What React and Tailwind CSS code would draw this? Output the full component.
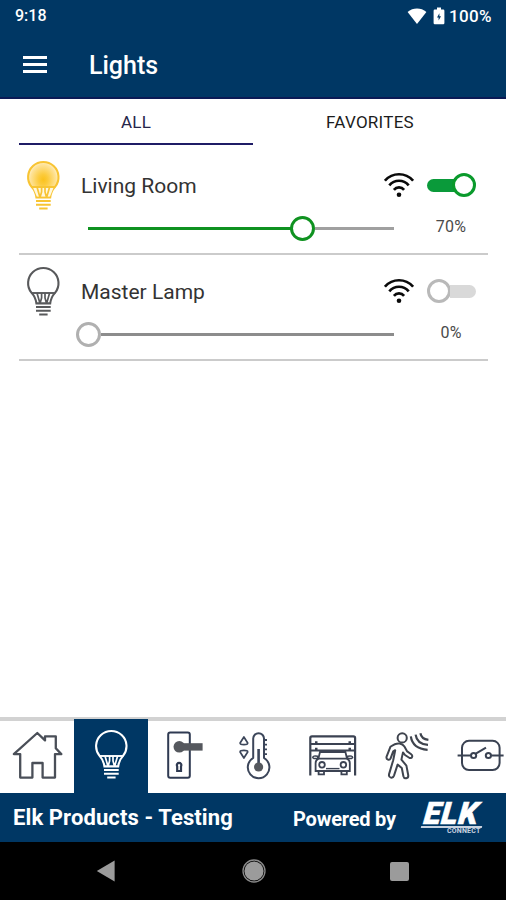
import React, { useState } from 'react';

const initialLights = [
  { id: 1, name: 'Living Room', level: 70 },
  { id: 2, name: 'Master Lamp', level: 0 },
];

const BulbIcon = ({ lit }) => (
  <svg width="35" height="52" viewBox="0 0 35 52" fill="none" stroke="currentColor" strokeWidth="2.1">
    <defs>
      <radialGradient id="glow">
        <stop offset="0" stopColor="#fbc21c" />
        <stop offset="0.3" stopColor="#fccb3c" />
        <stop offset="0.85" stopColor="#fee39a" />
        <stop offset="1" stopColor="#fff0c4" />
      </radialGradient>
    </defs>
    <path
      d="M10.4 37.4 C9.8 32.5 8 29.4 5.4 26.6 A15.2 15.2 0 1 1 29.2 26.6 C26.6 29.4 24.8 32.5 24.2 37.4 Z"
      fill={lit ? 'url(#glow)' : 'none'}
    />
    {lit && <path d="M7 27.6 H27.6 L24 36.6 H10.8 Z" fill="#fff8df" stroke="none" />}
    <path d="M5.2 27 H29.4" strokeWidth="1.9" />
    <path d="M11 27 L14 37.4 M15.6 27 V32 L14 37.4 M19 27 V32 L20.6 37.4 M23.6 27 L20.6 37.4" strokeWidth="1.7" />
    <path d="M10 41 H24.7 M10 44.7 H24.7 M13.2 48.6 H21.6" strokeWidth="2" />
  </svg>
);

const SignalIcon = () => (
  <svg width="30" height="26" viewBox="0 0 30 26" fill="none" stroke="#0a0a0a" strokeWidth="2.7">
    <path d="M0.9 8.7 C8.5 0.1 21.5 0.1 29.1 8.7" />
    <path d="M5.3 13.3 C10.6 7.2 19.4 7.2 24.7 13.3" />
    <path d="M9.9 17.9 C12.6 14.6 17.4 14.6 20.1 17.9" />
    <circle cx="15" cy="22.7" r="2.3" fill="#0a0a0a" stroke="none" />
  </svg>
);

const HomeIcon = () => (
  <svg width="74" height="72" viewBox="0 721 74 72" fill="none" stroke="#4a4f58" strokeWidth="2.3" strokeLinejoin="round">
    <path d="M37.3 733 L45 740.4 V736.3 H55.8 V748.2 L61.3 754.1 H55 V777.6 H42.6 V763 H32.4 V777.6 H20.2 V754.1 H13.8 Z" />
  </svg>
);

const LockIcon = () => (
  <svg width="74" height="72" viewBox="148 721 74 72" fill="none" stroke="#2f3a52" strokeWidth="2">
    <rect x="168.2" y="732.4" width="21.6" height="45.4" rx="2" />
    <circle cx="179.3" cy="746.8" r="5.8" fill="#55585e" stroke="none" />
    <rect x="179" y="743.2" width="23.6" height="7.4" fill="#55585e" stroke="none" />
    <path d="M177.2 771 V766.4 C175.2 761.8 183 761.8 181 766.4 V771 Z" strokeWidth="2.2" />
  </svg>
);

const ThermostatIcon = () => (
  <svg width="74" height="72" viewBox="222 721 74 72" fill="none" stroke="#3c465a" strokeWidth="2" strokeLinejoin="round">
    <path d="M253.2 758 V738.6 A5.4 5.4 0 0 1 264 738.6 V758 A10.8 10.8 0 1 1 253.2 758 Z" />
    <path d="M243.9 737 L247.7 743 Q248 744.6 243.9 744.6 Q239.8 744.6 240.1 743 Z" strokeWidth="1.7" />
    <path d="M243.9 758 L247.7 752 Q248 750.4 243.9 750.4 Q239.8 750.4 240.1 752 Z" strokeWidth="1.7" />
    <path d="M258.6 749 V767" strokeWidth="2.6" />
    <circle cx="258.6" cy="767" r="4.6" fill="#55585e" stroke="none" />
    <path d="M264 740 H267 M264 744.7 H267 M264 749.4 H267 M264 754.1 H267" strokeWidth="1.8" />
  </svg>
);

const GarageIcon = () => (
  <svg width="74" height="72" viewBox="296 721 74 72" fill="none" stroke="#3b4252" strokeWidth="1.8">
    <path d="M310.3 775.5 V738 Q310.3 736.3 312 736.3 H353.4 Q355.1 736.3 355.1 738 V775.5" strokeWidth="2.2" />
    <path d="M311 744 H354.5 M311 750.6 H354.5" strokeWidth="2" />
    <path d="M315 742.3 H317.5 M348.5 742.3 H351 M315 748.9 H317.5 M348.5 748.9 H351" strokeWidth="2.2" />
    <path d="M318.4 758.6 L320 752 H345.4 L347 758.6 Z" />
    <path d="M318.4 758.6 Q315.6 760 315.6 763 V771 H349.8 V763 Q349.8 760 347 758.6" />
    <path d="M312.8 757.6 Q312.8 755.4 317.6 756.2 L318 758.6 H314 Z M352.6 757.6 Q352.6 755.4 347.8 756.2 L347.4 758.6 H351.4 Z" strokeWidth="1.5" />
    <circle cx="322" cy="764.8" r="2.8" />
    <circle cx="343.4" cy="764.8" r="2.8" />
    <path d="M326 768.6 H339.5" strokeWidth="1.4" />
    <path d="M318.6 771 V774.3 H324 V771 M341.4 771 V774.3 H346.8 V771" />
  </svg>
);

const MotionIcon = () => (
  <svg width="74" height="72" viewBox="370 721 74 72" fill="none" stroke="#3f444e" strokeWidth="2" strokeLinejoin="round" strokeLinecap="round">
    <circle cx="402.2" cy="737.9" r="4.6" />
    <path d="M399.6 743.6 C396.6 743 393.6 744.6 390.4 746.8 L386.6 756.6 C385.8 759.8 389.6 760.8 390.6 758.4 L393.2 751.4 L395.2 750.2 L393.2 760.2 L389 774.4 C388.4 778 392.8 779 394 775.6 L397.6 764.6 L401.8 768 L403.4 776.2 C404.2 779.4 408.8 778.6 408.2 775 L406.4 765.6 L401.4 759.6 L403 752.4 L405 755 L409.6 758 C412.4 758.6 413 755.6 411.2 754.2 L407.2 751.4 L404.4 746.6 C403.2 744.6 401.6 744 399.6 743.6 Z" />
    <path d="M410.8 736.4 C412 744.4 418.2 749.2 427.6 749.8" strokeWidth="2.2" strokeLinecap="butt" />
    <path d="M415.6 734.6 C416.4 740.6 420.8 744.4 428 744.8" strokeWidth="2.2" strokeLinecap="butt" />
    <path d="M420.4 733.2 C421 736.8 423.6 739.2 428.4 739.8" strokeWidth="2.2" strokeLinecap="butt" />
  </svg>
);

const RelayIcon = () => (
  <svg width="74" height="72" viewBox="444 721 74 72" fill="none" stroke="#3a4252" strokeWidth="2">
    <rect x="462" y="740.8" width="37.6" height="29.2" rx="7" />
    <path d="M457.6 755.5 H470.6 M491.4 755.5 H503.6" />
    <circle cx="473.6" cy="755.5" r="2.6" />
    <circle cx="488.4" cy="755.5" r="2.6" />
    <path d="M475.8 753.6 L486 747.6" />
  </svg>
);

const navItems = [
  { id: 'home', icon: <HomeIcon /> },
  { id: 'lights', icon: <BulbIcon /> },
  { id: 'locks', icon: <LockIcon /> },
  { id: 'thermostats', icon: <ThermostatIcon /> },
  { id: 'garage', icon: <GarageIcon /> },
  { id: 'motion', icon: <MotionIcon /> },
  { id: 'relay', icon: <RelayIcon /> },
];

const StatusBar = () => (
  <div className="flex h-8 items-center justify-between pl-[15px] pr-[14px] text-white">
    <span className="text-[16px] font-medium leading-none">9:18</span>
    <div className="flex items-center">
      <svg width="20" height="17" viewBox="0 0 20 17" className="mr-[6px]">
        <path d="M0.6 4 C6 -0.6 14 -0.6 19.4 4 L10 16 Z" fill="#fff" />
      </svg>
      <svg width="12" height="18" viewBox="0 0 12 18" className="mr-[4px]">
        <path d="M4 0.6 H8 V2.6 H10.2 Q11.4 2.6 11.4 3.8 V16 Q11.4 17.2 10.2 17.2 H1.8 Q0.6 17.2 0.6 16 V3.8 Q0.6 2.6 1.8 2.6 H4 Z" fill="#fff" />
        <path d="M6.4 6.2 L4 10.4 H5.6 V13.4 L8 9.2 H6.4 Z" fill="#003764" />
      </svg>
      <span className="text-[17px] font-medium leading-none tracking-[0.4px]">100%</span>
    </div>
  </div>
);

const Toggle = ({ on, onClick }) => (
  <button onClick={onClick} className="flex h-6 w-[49px] items-center">
    {on ? (
      <>
        <span className="h-[13px] w-7 rounded-l-full bg-[#0a9a3a]" />
        <span className="-ml-[3px] h-6 w-6 rounded-full border-[3px] border-[#0a9a2c] bg-white" />
      </>
    ) : (
      <>
        <span className="h-6 w-6 rounded-full border-[3px] border-[#b9b9b9] bg-white" />
        <span className="-ml-px h-[13px] w-[26px] rounded-r-full bg-[#d9d9d9]" />
      </>
    )}
  </button>
);

const LevelSlider = ({ level }) => (
  <div className="flex h-[25px] w-[306px] shrink-0 items-center">
    <div
      className="h-[3px] bg-[#0f9220]"
      style={{ width: `${level}%`, marginRight: '-12px', flexShrink: 0 }}
    />
    <div
      className={`z-10 h-[25px] w-[25px] shrink-0 rounded-full border-[3px] bg-white ${
        level > 0 ? 'border-[#0f9220]' : 'border-[#b0b0b0]'
      }`}
    />
    <div className={`h-[3px] flex-1 ${level > 0 ? 'bg-[#a0a0a0]' : 'bg-[#8c8c8c]'}`} />
  </div>
);

const LightRow = ({ light, onToggle }) => {
  const on = light.level > 0;
  return (
    <div className="flex h-[106px] border-b-2 border-[#cbcbcb]">
      <div className={`w-[62px] pl-[7px] pt-[11px] ${on ? 'text-[#f8c433]' : 'text-[#58595b]'}`}>
        <BulbIcon lit={on} />
      </div>
      <div className="flex flex-1 flex-col pt-[23px]">
        <div className="flex h-[26px] items-center">
          <span className="flex-1 pt-[3px] text-[21px] leading-none text-[#333333]">
            {light.name}
          </span>
          <SignalIcon />
          <div className="ml-[13px] mr-3">
            <Toggle on={on} onClick={onToggle} />
          </div>
        </div>
        <div className="mt-[18px] flex items-center pl-[7px]">
          <LevelSlider level={light.level} />
          <span className="flex-1 pb-[3px] pl-5 text-center text-[16px] leading-none tracking-[0.2px] text-[#4a4a4a]">
            {light.level}%
          </span>
        </div>
      </div>
    </div>
  );
};

const ElkLogo = () => (
  <div className="flex h-8 w-[62px] flex-col text-white">
    <span className="-skew-x-6 pl-[3px] text-[31px] font-black italic leading-[24px] tracking-[0.8px] [-webkit-text-stroke:0.6px_white]">
      ELK
    </span>
    <span className="h-[2px] w-[61px] -skew-x-12 bg-[#c9d3e0]" />
    <span className="pl-[26px] text-[7px] font-bold leading-[6px] tracking-[0.2px] text-[#c9d3e0]">CONNECT</span>
  </div>
);

const App = () => {
  const [lights, setLights] = useState(initialLights);
  const [tab, setTab] = useState('ALL');
  const [section, setSection] = useState('lights');

  const toggleLight = (id) => {
    setLights(lights.map((l) => (l.id === id ? { ...l, level: l.level > 0 ? 0 : 70 } : l)));
  };

  return (
    <div className="flex h-[900px] w-[506px] flex-col overflow-hidden bg-white font-['Roboto',sans-serif]">
      <header className="h-[99px] shrink-0 border-b-2 border-[#0b1a55] bg-[#003764]">
        <StatusBar />
        <div className="flex h-[66px] items-center pl-[23px]">
          <button className="flex w-6 -translate-y-px flex-col gap-[4px]">
            <span className="h-[3px] bg-white" />
            <span className="h-[3px] bg-white" />
            <span className="h-[3px] bg-white" />
          </button>
          <h1 className="ml-[42px] text-[25px] font-medium leading-none text-white">Lights</h1>
        </div>
      </header>

      <main className="flex-1 pl-[19px] pr-[18px]">
        <div className="flex h-[50px]">
          {['ALL', 'FAVORITES'].map((name) => (
            <button
              key={name}
              onClick={() => setTab(name)}
              className={`h-[46px] w-[234px] border-b-2 pt-[4px] text-[17px] tracking-[0.25px] ${
                tab === name ? 'border-[#1f1c66] text-[#26254a]' : 'border-transparent text-[#1c1c1c]'
              }`}
            >
              {name}
            </button>
          ))}
        </div>
        {lights.map((light) => (
          <LightRow key={light.id} light={light} onToggle={() => toggleLight(light.id)} />
        ))}
      </main>

      <nav className="flex h-[76px] w-full shrink-0 overflow-hidden">
        {navItems.map((item) => (
          <button
            key={item.id}
            onClick={() => setSection(item.id)}
            className={`flex h-[76px] w-[74px] shrink-0 justify-center ${
              section === item.id
                ? 'border-t-2 border-[#d2d2d2] bg-[#003764] pt-[10px] text-white'
                : 'border-t-4 border-[#d2d2d2] bg-white text-[#3f444e]'
            }`}
          >
            {item.icon}
          </button>
        ))}
      </nav>

      <footer className="flex h-[49px] shrink-0 items-center bg-[#003764] pl-[13px] text-white">
        <span className="w-[280px] text-[22px] font-bold leading-none tracking-[0.1px]">Elk Products - Testing</span>
        <span className="w-[128px] pt-[2px] text-[20px] font-bold leading-none tracking-[-0.2px]">Powered by</span>
        <ElkLogo />
      </footer>

      <div className="flex h-[58px] shrink-0 items-center bg-black pl-[96px]">
        <svg width="19" height="22" viewBox="0 0 19 22">
          <path d="M0.8 11 L18.6 0.6 V21.4 Z" fill="#9b9b9b" />
        </svg>
        <svg width="24" height="24" viewBox="0 0 24 24" className="ml-[127px]">
          <circle cx="12" cy="12" r="11" fill="none" stroke="#8a8a8a" strokeWidth="1.3" />
          <circle cx="12" cy="12" r="9.6" fill="#9b9b9b" />
        </svg>
        <span className="ml-[124px] h-[19px] w-[19px] rounded-[2px] bg-[#9b9b9b]" />
      </div>
    </div>
  );
};

export default App;
